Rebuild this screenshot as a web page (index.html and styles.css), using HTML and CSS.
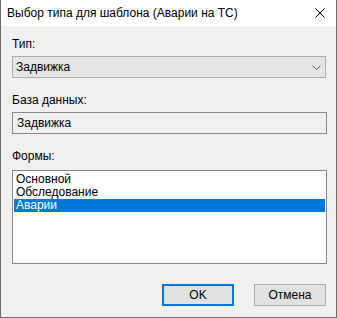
FILE: index.html
```
<!DOCTYPE html>
<html lang="ru">
<head>
  <meta charset="UTF-8" />
  <title>Выбор типа для шаблона</title>
  <link rel="stylesheet" href="styles.css">
</head>
<body>
  <div class="window">
    <div class="titlebar">
      <span class="title">Выбор типа для шаблона (Аварии на ТС)</span>
      <svg class="close" width="10" height="10" viewBox="0 0 10 10">
        <path d="M0.5 0.5 L9.5 9.5 M9.5 0.5 L0.5 9.5" stroke="#000" stroke-width="1" fill="none"/>
      </svg>
    </div>

    <div class="content">
      <div class="label first">Тип:</div>
      <div class="combo">
        <span>Задвижка</span>
        <svg class="chevron" width="9" height="5" viewBox="0 0 9 5">
          <path d="M0.5 0.5 L4.5 4.5 L8.5 0.5" stroke="#606060" stroke-width="1" fill="none"/>
        </svg>
      </div>

      <div class="label">База данных:</div>
      <div class="textbox">Задвижка</div>

      <div class="label forms">Формы:</div>
      <div class="listbox">
        <div class="item">Основной</div>
        <div class="item">Обследование</div>
        <div class="item selected">Аварии</div>
      </div>

      <div class="buttons">
        <button class="btn default">OK</button>
        <button class="btn">Отмена</button>
      </div>
    </div>
  </div>
</body>
</html>
```

FILE: styles.css
```
html, body {
  margin: 0;
  padding: 0;
  background-color: #f0f0f0;
  font-family: "Liberation Sans", Arial, sans-serif;
  font-size: 12px;
  color: black;
}
.window {
  width: 335px;
  height: 317px;
  border: 1px solid #6b6b6b;
  border-top: none;
  background-color: #f0f0f0;
  display: flex;
  flex-direction: column;
}
.titlebar {
  height: 26px;
  background-color: white;
  display: flex;
  align-items: flex-start;
  padding-left: 6px;
  box-sizing: border-box;
  padding-top: 6px;
  position: relative;
}
.title {
  line-height: 15px;
}
.close {
  position: absolute;
  left: 314px;
  top: 8px;
}
.content {
  padding: 11px 9px 0 11px;
  display: flex;
  flex-direction: column;
}
.label {
  line-height: 15px;
  margin-top: 15px;
  margin-bottom: 4px;
}
.label.first {
  margin-top: 0;
}
.label.forms {
  margin-bottom: 6px;
}
.combo {
  height: 22px;
  width: 314px;
  box-sizing: border-box;
  border: 1px solid #adadad;
  background-color: #e5e5e5;
  display: flex;
  align-items: center;
  justify-content: space-between;
  padding: 0 4px 0 3px;
}
.chevron {
  margin-top: 1px;
}
.textbox {
  height: 22px;
  box-sizing: border-box;
  border: 1px solid #8a8a8a;
  background-color: #f0f0f0;
  display: flex;
  align-items: center;
  padding-left: 4px;
}
.listbox {
  height: 94px;
  box-sizing: border-box;
  border: 1px solid #828790;
  background-color: white;
  padding: 2px 1px 0 1px;
}
.item {
  height: 13px;
  line-height: 13px;
  padding-left: 2px;
}
.item.selected {
  background-color: #0078d7;
  color: white;
}
.buttons {
  display: flex;
  justify-content: flex-end;
  gap: 20px;
  margin-top: 20px;
  margin-right: 1px;
}
.btn {
  width: 72px;
  height: 22px;
  margin: 0;
  padding: 0;
  font-family: "Liberation Sans", Arial, sans-serif;
  font-size: 12px;
  color: black;
  background-color: #e1e1e1;
  border: 1px solid #adadad;
}
.btn.default {
  border: 2px solid #0078d7;
}
```
